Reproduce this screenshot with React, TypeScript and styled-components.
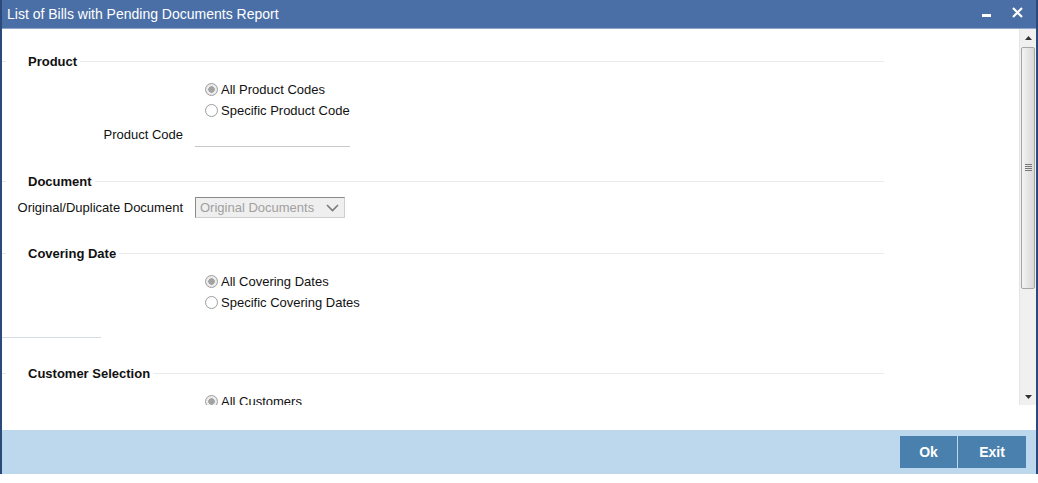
import React from 'react';
import styled, { createGlobalStyle } from 'styled-components';

const GlobalStyle = createGlobalStyle`
  html, body {
    margin: 0;
    padding: 0;
    background: #fff;
    font-family: "Liberation Sans", Arial, sans-serif;
  }
`;

const Window = styled.div`
  width: 1038px;
  height: 474px;
  box-sizing: border-box;
  border-left: 2px solid #2b4a7c;
  border-right: 2px solid #2b4a7c;
  display: flex;
  flex-direction: column;
  background: #fff;
`;

const TitleBar = styled.div`
  height: 28px;
  flex: none;
  background: #4a6fa6;
  border-bottom: 1px solid #8ea7c9;
  display: flex;
  align-items: center;
  padding-left: 5px;
  padding-right: 13px;
`;

const Title = styled.div`
  flex: 1;
  color: #fff;
  font-size: 14px;
`;

const WindowButtons = styled.div`
  display: flex;
  align-items: center;
  gap: 21px;
  padding-bottom: 4px;
`;

const Body = styled.div`
  height: 376px;
  flex: none;
  display: flex;
  overflow: hidden;
`;

const Content = styled.div`
  flex: 1;
  padding-top: 24px;
  overflow: hidden;
`;

const HeadingRow = styled.div<{ $gap?: number }>`
  display: flex;
  align-items: center;
  height: 16px;
  width: 882px;
  margin-top: ${(p) => p.$gap ?? 0}px;
`;

const Stub = styled.div`
  width: 4px;
  height: 1px;
  background: #e8e8e8;
  margin-right: 22px;
`;

const HeadingText = styled.div`
  font-size: 13px;
  font-weight: bold;
  color: #111;
  margin-right: 3px;
`;

const Rule = styled.div`
  flex: 1;
  height: 1px;
  background: #ebebeb;
`;

const RadioGroup = styled.div`
  padding-left: 203px;
  margin-top: 10px;
`;

const RadioRow = styled.label`
  display: flex;
  align-items: center;
  height: 21px;
  font-size: 13px;
  color: #111;
  gap: 3px;
`;

const RadioDot = styled.span<{ $on?: boolean }>`
  width: 11px;
  height: 11px;
  border-radius: 50%;
  border: 1px solid #9c9c9c;
  background: ${(p) => (p.$on ? 'radial-gradient(circle, #a3a3a3 0 3px, #ececec 3.5px)' : '#fff')};
  flex: none;
`;

const FieldRow = styled.div<{ $gap?: number }>`
  display: flex;
  align-items: center;
  margin-top: ${(p) => p.$gap ?? 0}px;
`;

const FieldLabel = styled.div`
  width: 181px;
  text-align: right;
  font-size: 13px;
  color: #111;
  margin-right: 12px;
`;

const LineInput = styled.div`
  width: 155px;
  height: 25px;
  border-bottom: 1px solid #c8c8c8;
`;

const Select = styled.div`
  width: 150px;
  height: 21px;
  box-sizing: border-box;
  border: 1px solid #cfcfcf;
  border-top-color: #8a8a8a;
  border-left-color: #8a8a8a;
  background: #efefef;
  display: flex;
  align-items: center;
  padding-left: 4px;
  padding-right: 5px;
  font-size: 13px;
  color: #a0a0a0;
`;

const SelectText = styled.span`
  flex: 1;
`;

const ShortRule = styled.div`
  width: 99px;
  height: 1px;
  background: #d6dbe1;
  margin-top: 24px;
`;

const Scrollbar = styled.div`
  width: 17px;
  flex: none;
  display: flex;
  flex-direction: column;
  background: #f0f0f0;
  border-left: 1px solid #e4e4e4;
  box-sizing: border-box;
`;

const ArrowBox = styled.div`
  height: 17px;
  flex: none;
  display: flex;
  align-items: center;
  justify-content: center;
`;

const Thumb = styled.div`
  height: 240px;
  margin: 1px 1px 0 1px;
  flex: none;
  border: 1px solid #a6a6a6;
  border-radius: 2px;
  background: linear-gradient(to right, #f4f4f4, #e2e2e2 60%, #d8d8d8);
  display: flex;
  align-items: center;
  justify-content: center;
`;

const Track = styled.div`
  flex: 1;
`;

const Gap = styled.div`
  height: 25px;
  flex: none;
`;

const Footer = styled.div`
  flex: 1;
  background: #bdd7ec;
  display: flex;
  justify-content: flex-end;
  align-items: flex-start;
  padding-top: 6px;
  padding-right: 10px;
  gap: 1px;
`;

const Button = styled.button<{ $w: number }>`
  width: ${(p) => p.$w}px;
  height: 32px;
  border: none;
  background: #4a80ad;
  color: #fff;
  font-family: "Liberation Sans", Arial, sans-serif;
  font-size: 14px;
  font-weight: bold;
  padding: 0;
`;

const Heading: React.FC<{ text: string; gap?: number }> = ({ text, gap }) => (
  <HeadingRow $gap={gap}>
    <Stub />
    <HeadingText>{text}</HeadingText>
    <Rule />
  </HeadingRow>
);

const Radio: React.FC<{ label: string; on?: boolean }> = ({ label, on }) => (
  <RadioRow>
    <RadioDot $on={on} />
    {label}
  </RadioRow>
);

export default function App() {
  return (
    <>
      <GlobalStyle />
      <Window>
        <TitleBar>
          <Title>List of Bills with Pending Documents Report</Title>
          <WindowButtons>
            <svg width="9" height="12" viewBox="0 0 9 12">
              <rect x="0" y="8" width="9" height="3" fill="#fff" />
            </svg>
            <svg width="11" height="11" viewBox="0 0 11 11">
              <path d="M1 1 L10 10 M10 1 L1 10" stroke="#fff" strokeWidth="2.2" />
            </svg>
          </WindowButtons>
        </TitleBar>
        <Body>
          <Content>
            <Heading text="Product" />
            <RadioGroup>
              <Radio label="All Product Codes" on />
              <Radio label="Specific Product Code" />
            </RadioGroup>
            <FieldRow>
              <FieldLabel>Product Code</FieldLabel>
              <LineInput />
            </FieldRow>
            <Heading text="Document" gap={26} />
            <FieldRow $gap={8}>
              <FieldLabel>Original/Duplicate Document</FieldLabel>
              <Select>
                <SelectText>Original Documents</SelectText>
                <svg width="13" height="8" viewBox="0 0 13 8">
                  <path d="M1 1 L6.5 6.5 L12 1" stroke="#7a7a7a" strokeWidth="1.6" fill="none" />
                </svg>
              </Select>
            </FieldRow>
            <Heading text="Covering Date" gap={27} />
            <RadioGroup>
              <Radio label="All Covering Dates" on />
              <Radio label="Specific Covering Dates" />
            </RadioGroup>
            <ShortRule />
            <Heading text="Customer Selection" gap={27} />
            <RadioGroup>
              <Radio label="All Customers" on />
            </RadioGroup>
          </Content>
          <Scrollbar>
            <ArrowBox>
              <svg width="7" height="4" viewBox="0 0 7 4">
                <path d="M0 4 L3.5 0 L7 4 Z" fill="#333" />
              </svg>
            </ArrowBox>
            <Thumb>
              <svg width="7" height="8" viewBox="0 0 7 8">
                <path d="M0 0.5 H7 M0 2.5 H7 M0 4.5 H7 M0 6.5 H7" stroke="#777" strokeWidth="1" />
              </svg>
            </Thumb>
            <Track />
            <ArrowBox>
              <svg width="7" height="4" viewBox="0 0 7 4">
                <path d="M0 0 L7 0 L3.5 4 Z" fill="#333" />
              </svg>
            </ArrowBox>
          </Scrollbar>
        </Body>
        <Gap />
        <Footer>
          <Button $w={57}>Ok</Button>
          <Button $w={68}>Exit</Button>
        </Footer>
      </Window>
    </>
  );
}
